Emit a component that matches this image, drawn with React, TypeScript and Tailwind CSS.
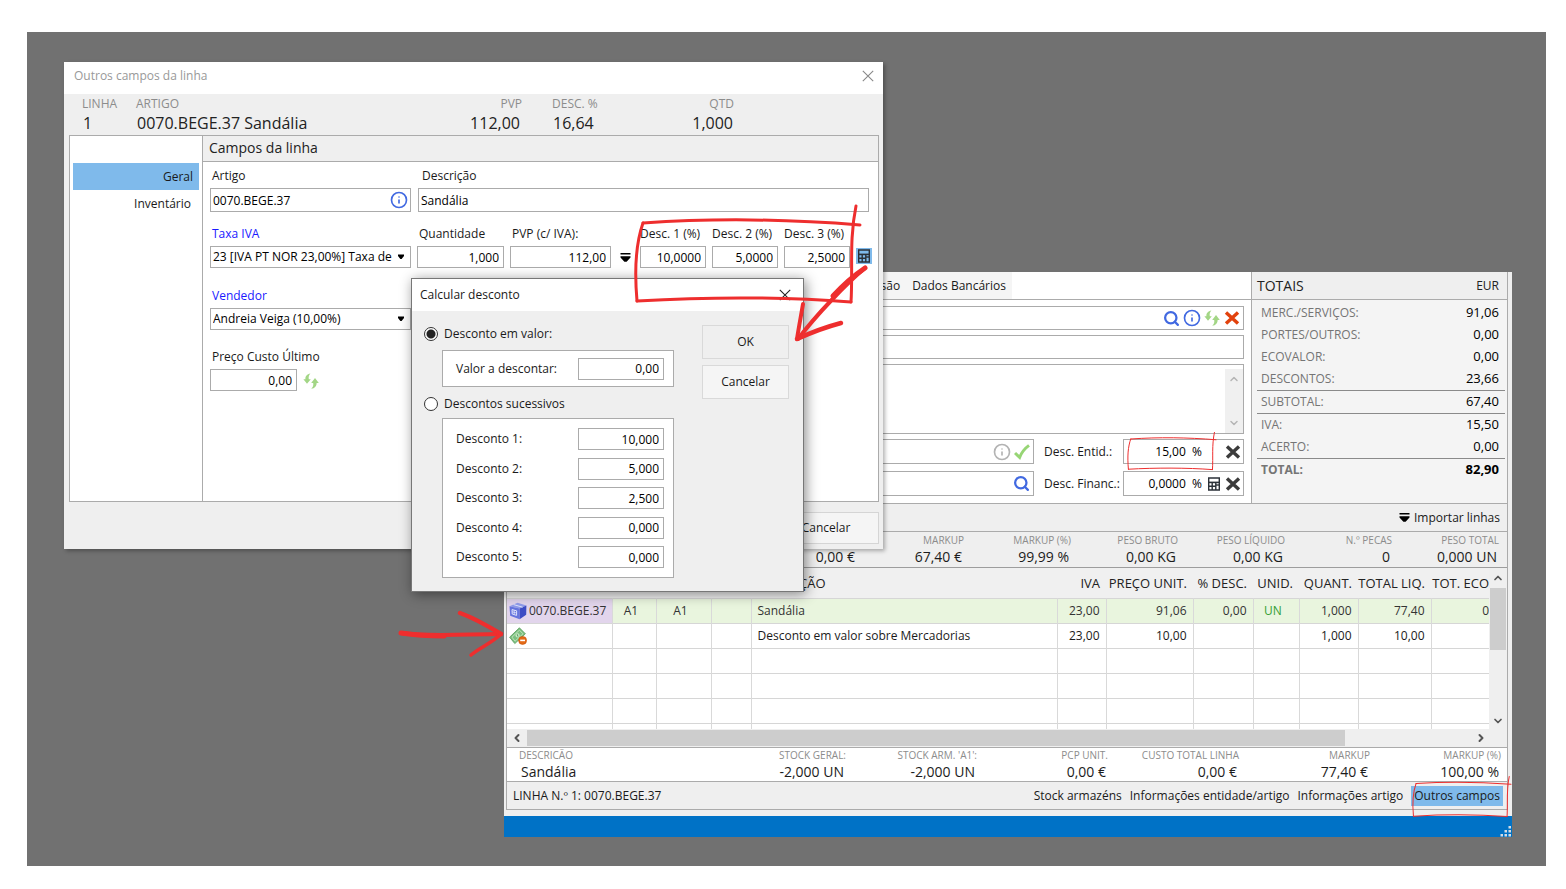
import React from 'react';
import { Search, Info, ChevronUp, ChevronDown, ChevronLeft, ChevronRight } from 'lucide-react';
import { clsx } from 'clsx';

type IconProps = { className?: string };

const RefreshIcon = ({ className }: IconProps) => (
    <svg viewBox="0 0 16 16" className={clsx('h-4 w-4 shrink-0 text-[#a3d686]', className)} fill="currentColor">
        <path d="M7.4 0.6C4 1 2.2 3.4 2.4 6.2H0.4L4 10.8L7.8 6.2H5.8C5.4 4.2 5.8 2.2 7.4 0.6Z" />
        <path d="M8.2 15.8C11.8 15.4 13.8 13 13.6 10H15.8L12 5L8.2 10H10.2C10.6 12.2 10 14.4 8.2 15.8Z" />
    </svg>
);

const CrossIcon = ({ className }: IconProps) => (
    <svg viewBox="0 0 16 16" className={clsx('h-4 w-4 shrink-0', className)} fill="none" stroke="currentColor" strokeWidth="3.4">
        <path d="M2 2.5L14 13.5M14 2.5L2 13.5" />
    </svg>
);

const CloseIcon = ({ className }: IconProps) => (
    <svg viewBox="0 0 12 12" className={clsx('h-3 w-3', className)} fill="none" stroke="currentColor" strokeWidth="1.1">
        <path d="M0.8 0.8L11.2 11.2M11.2 0.8L0.8 11.2" />
    </svg>
);

const CheckIcon = () => (
    <svg viewBox="0 0 16 16" className="h-4 w-4 shrink-0 text-[#97d575]" fill="none" stroke="currentColor" strokeWidth="3">
        <path d="M1 9L5.6 13.4C7.4 9 10.6 4.6 15 1.4" />
    </svg>
);

const CalculatorIcon = () => (
    <svg viewBox="0 0 14 14" className="h-3.5 w-3.5 shrink-0" fill="none" stroke="#2b3138" strokeWidth="1.4">
        <path d="M1.7 1H12.3V13H1.7Z" />
        <path d="M1.7 5.4H12.3" strokeWidth="1.6" />
        <path d="M1.7 9.2H9M5.2 6V13M8.8 6V13" />
        <path d="M9 8H12.3" />
    </svg>
);

const ImportIcon = () => (
    <svg viewBox="0 0 11 11" className="h-[11px] w-[11px] shrink-0" fill="#000">
        <path d="M0.5 1H10.5V2.6H0.5ZM0.5 4.2H10.5V5.6L6.6 9.8H4.4L0.5 5.6Z" />
    </svg>
);

const BoxIcon = () => (
    <svg viewBox="0 0 18 18" className="h-[18px] w-[18px] shrink-0">
        <path d="M0.5 4.2L8.6 0.8L17.4 3.4L10.6 6.6Z" fill="#8f9bea" />
        <path d="M0.5 4.2L10.6 6.6V17.2L1.2 13.8Z" fill="#6675de" />
        <path d="M17.4 3.4L10.6 6.6V17.2L17.2 12.8Z" fill="#3d4cc4" />
        <path d="M4.6 2.6L13.6 5.2M3 7.6L7.6 8.8V13.4L3.2 12Z" fill="none" stroke="#dfe3fb" />
        <path d="M5.2 8.2V12.6M3.2 9.8L7.6 11" stroke="#dfe3fb" strokeWidth="0.8" />
    </svg>
);

const MoneyIcon = () => (
    <svg viewBox="0 0 18 18" className="h-[18px] w-[18px] shrink-0">
        <path d="M0.6 10.2L10.4 0.8L16.4 6.8L5.8 16.6Z" fill="#7cbf7f" stroke="#559b5b" strokeWidth="0.8" />
        <path d="M3 10.2L10.4 3.2L14 6.8L6 14.2Z" fill="none" stroke="#c4e7c1" strokeWidth="0.9" />
        <circle cx="8.6" cy="8.4" r="2.1" fill="#c4e7c1" />
        <path d="M8.2 7.2L9 9.6" stroke="#559b5b" />
        <circle cx="13.6" cy="13.4" r="4" fill="#e56a17" stroke="#c65208" strokeWidth="0.6" />
        <path d="M11.2 13.4H16" stroke="#fff" strokeWidth="1.6" />
    </svg>
);

// Hand drawn frame, stretched over whatever it marks
const MarkerFrame = ({ className, width }: { className: string; width: number }) => (
    <svg
        viewBox="0 0 224 98"
        preserveAspectRatio="none"
        className={clsx('pointer-events-none absolute z-10 overflow-visible', className)}
        fill="none"
        stroke="#ee2e2e"
        strokeWidth={width}
        strokeLinecap="round"
    >
        <path vectorEffect="non-scaling-stroke" d="M7 18C80 13 150 14 224 20" />
        <path vectorEffect="non-scaling-stroke" d="M7 18C0 38 -2 62 1 96" />
        <path vectorEffect="non-scaling-stroke" d="M1 96C70 92 150 92 215 97" />
        <path vectorEffect="non-scaling-stroke" d="M220 1C213 35 217 65 215 97" />
    </svg>
);

const field = 'border border-[#ababab] bg-white text-xs text-black outline-none';

interface NumberFieldProps {
    id: string;
    value: string;
    className?: string;
}

function NumberField({ id, value, className }: NumberFieldProps) {
    return <input id={id} defaultValue={value} className={clsx(field, 'h-[22px] px-1 text-right', className)} />;
}

function LabeledNumber({ id, label, value, className, labelClass }: NumberFieldProps & { label: string; labelClass?: string }) {
    return (
        <div className={clsx('flex flex-col gap-0.5', className)}>
            <label htmlFor={id} className={clsx('h-[18px] whitespace-nowrap', labelClass)}>{label}</label>
            <NumberField id={id} value={value} className="w-full" />
        </div>
    );
}

function SelectField({ id, label, value }: { id: string; label: string; value: string }) {
    return (
        <div className="flex w-[201px] flex-col gap-0.5">
            <label htmlFor={id} className="h-[18px] px-0.5 text-[#1a1aff]">{label}</label>
            <div className="relative">
                <select id={id} className={clsx(field, 'h-[22px] w-full appearance-none pl-0.5')}>
                    <option>{value}</option>
                </select>
                <svg viewBox="0 0 6 5" className="pointer-events-none absolute top-2 right-[7px] h-[5px] w-1.5">
                    <path d="M0 0.5H6V2L3.6 5H2.4L0 2Z" fill="#000" />
                </svg>
            </div>
        </div>
    );
}

const totals = [
    { label: 'MERC./SERVIÇOS:', value: '91,06' },
    { label: 'PORTES/OUTROS:', value: '0,00' },
    { label: 'ECOVALOR:', value: '0,00' },
    { label: 'DESCONTOS:', value: '23,66', line: true },
    { label: 'SUBTOTAL:', value: '67,40', line: true },
    { label: 'IVA:', value: '15,50' },
    { label: 'ACERTO:', value: '0,00', line: true },
    { label: 'TOTAL:', value: '82,90', bold: true },
];

const summary = [
    { label: '', value: '0,00 €' },
    { label: 'MARKUP', value: '67,40 €' },
    { label: 'MARKUP (%)', value: '99,99 %' },
    { label: 'PESO BRUTO', value: '0,00 KG' },
    { label: 'PESO LÍQUIDO', value: '0,00 KG' },
    { label: 'N.º PECAS', value: '0' },
    { label: 'PESO TOTAL', value: '0,000 UN' },
];

const lineSummary = [
    { label: 'STOCK GERAL:', value: '-2,000 UN' },
    { label: "STOCK ARM. 'A1':", value: '-2,000 UN' },
    { label: 'PCP UNIT.', value: '0,00 €' },
    { label: 'CUSTO TOTAL LINHA', value: '0,00 €' },
    { label: 'MARKUP', value: '77,40 €' },
    { label: 'MARKUP (%)', value: '100,00 %' },
];

const columns = [
    { title: '', width: 'w-[105px]' },
    { title: '', width: 'w-11' },
    { title: '', width: 'w-[55px]' },
    { title: '', width: 'w-10' },
    { title: 'ÇÃO', width: '' },
    { title: 'IVA', width: 'w-[49px]' },
    { title: 'PREÇO UNIT.', width: 'w-[87px]' },
    { title: '% DESC.', width: 'w-[60px]' },
    { title: 'UNID.', width: 'w-[46px]' },
    { title: 'QUANT.', width: 'w-[59px]' },
    { title: 'TOTAL LIQ.', width: 'w-[73px]' },
    { title: 'TOT. ECO', width: 'w-[58px]' },
];

const lines = [
    ['0070.BEGE.37', 'A1', 'A1', '', 'Sandália', '23,00', '91,06', '0,00', 'UN', '1,000', '77,40', '0'],
    ['', '', '', '', 'Desconto em valor sobre Mercadorias', '23,00', '10,00', '', '', '1,000', '10,00', ''],
    ['', '', '', '', '', '', '', '', '', '', '', ''],
    ['', '', '', '', '', '', '', '', '', '', '', ''],
    ['', '', '', '', '', '', '', '', '', '', '', ''],
];

function Stat({ label, value, className }: { label: string; value: string; className?: string }) {
    return (
        <div className={clsx('shrink-0 whitespace-nowrap', className)}>
            <div className="h-3.5 text-[10px] leading-[14px] text-[#8c8c8c]">{label}</div>
            <div className="px-0.5 text-sm leading-5 text-[#1c1c1c]">{value}</div>
        </div>
    );
}

function LinesTable() {
    return (
        <div className="flex h-[161px] bg-[#efefef]">
            <div className="min-w-0 flex-1 overflow-hidden">
                <table className="w-full table-fixed border-collapse bg-white">
                    <thead>
                        <tr className="h-[30px] bg-[#f0f0f0] text-[13px] text-[#222]">
                            {columns.map((col, i) => (
                                <th
                                    key={i}
                                    className={clsx(
                                        'p-0 pt-0.5 font-normal whitespace-nowrap',
                                        col.width,
                                        i === 4 ? 'pl-12 text-left' : 'text-right',
                                        i > 4 && i < 11 && 'pr-1.5'
                                    )}
                                >
                                    {col.title}
                                </th>
                            ))}
                        </tr>
                    </thead>
                    <tbody className="text-xs">
                        {lines.map((line, row) => (
                            <tr key={row} className={clsx('h-[25px] border-y border-[#d6d6d6]', row === 0 && 'bg-[#e9f5de] text-[#333]')}>
                                {line.map((cell, i) => (
                                    <td
                                        key={i}
                                        className={clsx(
                                            'p-0 whitespace-nowrap',
                                            i < 11 && 'border-r border-[#d9d9d9] pr-1.5',
                                            i === 0 && 'pl-0.5',
                                            row === 0 && i === 0 && 'bg-[#e2d5ec]',
                                            (i === 1 || i === 2 || i === 8) && 'text-center',
                                            i === 8 && 'text-[#35a035]',
                                            i === 4 && 'pl-1.5',
                                            i > 4 && i !== 8 && 'text-right'
                                        )}
                                    >
                                        {i === 0 ? (
                                            <span className="flex h-6 items-center gap-0.5">
                                                {row === 0 && <BoxIcon />}
                                                {row === 1 && <MoneyIcon />}
                                                {cell}
                                            </span>
                                        ) : cell}
                                    </td>
                                ))}
                            </tr>
                        ))}
                        <tr className="h-1.5">
                            {columns.map((_, i) => (
                                <td key={i} className={clsx('p-0', i < 11 && 'border-r border-[#d9d9d9]')} />
                            ))}
                        </tr>
                    </tbody>
                </table>
            </div>
            <div className="flex w-[18px] flex-col items-center text-[#555]">
                <ChevronUp className="my-1 h-3 w-3" strokeWidth={3.5} />
                <div className="h-[62px] w-4 bg-[#cdcdcd]" />
                <ChevronDown className="mt-auto mb-0.5 h-3 w-3" strokeWidth={3.5} />
            </div>
        </div>
    );
}

function DocumentWindow() {
    return (
        <section className="absolute top-[240px] right-[34px] left-[477px] bg-[#efefef]">
            <div className="mr-1 ml-0.5 border-x border-[#ababab]">
                <div className="flex h-[232px] border-b border-[#ababab]">
                    {/* Entidade */}
                    <div className="flex min-w-0 flex-1 flex-col bg-white">
                        <nav className="flex h-7 shrink-0 border-b border-[#ababab] text-xs">
                            <div className="flex w-[505px] items-center justify-end gap-3 bg-[#f5f5f5] pr-1.5">
                                <a href="#comissao">são</a>
                                <a href="#bancarios">Dados Bancários</a>
                            </div>
                        </nav>
                        <div className="flex flex-col gap-[5px] pt-1.5 pr-[7px]">
                            <div className={clsx(field, 'flex h-6 items-center gap-[3px] pr-[3px]')}>
                                <input aria-label="Entidade" className="h-full min-w-0 flex-1 outline-none" />
                                <Search className="h-[17px] w-[17px] text-[#4169e1]" strokeWidth={3.2} />
                                <Info className="h-[18px] w-[18px] text-[#4169e1]" strokeWidth={2.2} />
                                <RefreshIcon />
                                <CrossIcon className="ml-px text-[#e2420d]" />
                            </div>
                            <input aria-label="Nome" className={clsx(field, 'h-6')} />
                            <div className={clsx(field, 'flex h-[70px]')}>
                                <textarea aria-label="Morada" className="min-w-0 flex-1 resize-none outline-none" />
                                <div className="mt-1 flex w-[18px] flex-col items-center justify-between bg-[#f0f0f0] py-1 text-[#b5b5b5]">
                                    <ChevronUp className="h-3 w-3" strokeWidth={3} />
                                    <ChevronDown className="h-3 w-3" strokeWidth={3} />
                                </div>
                            </div>
                            <div className="flex items-center">
                                <div className={clsx(field, 'flex h-[25px] flex-1 items-center gap-[3px] pr-[3px]')}>
                                    <input aria-label="Contribuinte" className="h-full min-w-0 flex-1 outline-none" />
                                    <Info className="h-[18px] w-[18px] text-[#b3b3b3]" strokeWidth={2.2} />
                                    <CheckIcon />
                                </div>
                                <label htmlFor="descEntid" className="w-[89px] pl-2.5 text-xs">Desc. Entid.:</label>
                                <div className={clsx(field, 'relative flex h-[25px] w-[121px] items-center gap-1 pr-0.5')}>
                                    <input id="descEntid" defaultValue="15,00  %" className="h-full w-[78px] text-right whitespace-pre outline-none" />
                                    <CrossIcon className="ml-auto text-[#3c3c3c]" />
                                    <MarkerFrame className="-top-2 left-1 h-[38px] w-[88px]" width={1} />
                                </div>
                            </div>
                            <div className="mt-0.5 flex items-center">
                                <div className={clsx(field, 'flex h-[25px] flex-1 items-center pr-[3px]')}>
                                    <input aria-label="Condição" className="h-full min-w-0 flex-1 outline-none" />
                                    <Search className="h-[17px] w-[17px] text-[#4169e1]" strokeWidth={3.2} />
                                </div>
                                <label htmlFor="descFinanc" className="w-[89px] pl-2.5 text-xs">Desc. Financ.:</label>
                                <div className={clsx(field, 'flex h-[25px] w-[121px] items-center gap-1 pr-0.5')}>
                                    <input id="descFinanc" defaultValue="0,0000  %" className="h-full w-[78px] text-right whitespace-pre outline-none" />
                                    <span className="ml-auto"><CalculatorIcon /></span>
                                    <CrossIcon className="text-[#3c3c3c]" />
                                </div>
                            </div>
                        </div>
                    </div>

                    {/* Totais */}
                    <div className="w-[256px] border-l border-[#ababab] bg-[#f4f4f4]">
                        <div className="flex h-7 items-center justify-between border-b border-[#ababab] bg-[#efefef] pr-2 pl-[5px] text-[#222]">
                            <h2 className="text-sm">TOTAIS</h2>
                            <span className="text-xs">EUR</span>
                        </div>
                        <dl className="pt-0.5 pr-0.5 pl-[5px]">
                            {totals.map(({ label, value, line, bold }) => (
                                <div
                                    key={label}
                                    className={clsx(
                                        'flex items-center justify-between pr-1.5 pl-1',
                                        line ? 'h-[23px] border-b border-[#8a8a8a]' : 'h-[22px]',
                                        bold && 'font-bold'
                                    )}
                                >
                                    <dt className="text-xs text-[#757575]">{label}</dt>
                                    <dd className="text-[13px] text-black">{value}</dd>
                                </div>
                            ))}
                        </dl>
                    </div>
                </div>

                <div className="flex h-7 items-center justify-end border-b border-[#ababab] pr-[7px]">
                    <button className="flex items-center gap-1 text-xs">
                        <ImportIcon />
                        Importar linhas
                    </button>
                </div>

                <div className="flex h-9 justify-end border-b border-[#9d9d9d] pt-px pr-2 text-right">
                    {summary.map((item, i) => (
                        <Stat key={i} {...item} className="w-[107px]" />
                    ))}
                </div>

                <LinesTable />

                <div className="flex h-[19px] items-center border-b border-[#ababab]">
                    <ChevronLeft className="mx-1 h-3 w-3 text-[#555]" strokeWidth={4} />
                    <div className="h-4 flex-1 bg-[#cdcdcd]" />
                    <div className="flex w-[162px] justify-end pr-5">
                        <ChevronRight className="h-3 w-3 text-[#555]" strokeWidth={4} />
                    </div>
                </div>

                <div className="flex h-[34px] border-b border-[#ababab] bg-white pr-1.5 text-right">
                    <Stat label="DESCRICÃO" value="Sandália" className="mr-auto pl-3 text-left" />
                    {lineSummary.map((item, i) => (
                        <Stat key={i} {...item} className="w-[131px]" />
                    ))}
                </div>

                <div className="flex h-7 items-center border-b border-[#ababab] pr-1 pl-1.5 text-xs">
                    <span className="flex-1">LINHA N.º 1: 0070.BEGE.37</span>
                    <nav className="flex items-center gap-2">
                        <a href="#stock">Stock armazéns</a>
                        <a href="#entidade">Informações entidade/artigo</a>
                        <a href="#artigo">Informações artigo</a>
                        <a href="#outros" className="relative bg-[#7fbaeb] px-[3px] py-0.5">
                            Outros campos
                            <MarkerFrame className="-top-2.5 left-0.5 h-[41px] w-[98px]" width={1} />
                        </a>
                    </nav>
                </div>
            </div>
            <div className="mt-1.5 flex h-[21px] items-end justify-end bg-[#0072c6]">
                <svg viewBox="0 0 13 12" className="h-3 w-[13px]" fill="#d5dde5">
                    <path d="M9.5 1H12V3.5H9.5ZM5.5 5H8V7.5H5.5ZM9.5 5H12V7.5H9.5ZM1.5 9H4V11.5H1.5ZM5.5 9H8V11.5H5.5ZM9.5 9H12V11.5H9.5Z" />
                </svg>
            </div>
        </section>
    );
}

function LineFieldsWindow() {
    return (
        <section className="absolute top-[30px] left-[37px] w-[819px] bg-[#efefef] shadow-[2px_2px_4px_rgba(0,0,0,0.3)]">
            <header className="flex h-8 items-center justify-between bg-white pr-[9px] pb-1 pl-2.5">
                <h1 className="text-xs text-[#999]">Outros campos da linha</h1>
                <button aria-label="Fechar" className="text-[#888]"><CloseIcon /></button>
            </header>

            <div className="grid h-[41px] grid-cols-[54px_1fr_100px_76px_106px_149px] pt-px pl-[18px] text-base leading-5 whitespace-nowrap text-[#222]">
                <div>
                    <div className="text-xs leading-[18px] text-[#8c8c8c]">LINHA</div>
                    <div className="pl-px">1</div>
                </div>
                <div>
                    <div className="text-xs leading-[18px] text-[#8c8c8c]">ARTIGO</div>
                    <div className="pl-px">0070.BEGE.37 Sandália</div>
                </div>
                <div className="pr-[30px] text-right">
                    <div className="text-xs leading-[18px] text-[#8c8c8c]">PVP</div>
                    <div className="pr-0.5">112,00</div>
                </div>
                <div>
                    <div className="text-xs leading-[18px] text-[#8c8c8c]">DESC. %</div>
                    <div className="pl-px">16,64</div>
                </div>
                <div className="text-right">
                    <div className="text-xs leading-[18px] text-[#8c8c8c]">QTD</div>
                    <div className="pr-px">1,000</div>
                </div>
            </div>

            <div className="mr-1 ml-[5px] flex h-[367px] border border-[#ababab] bg-white text-xs">
                <nav className="w-[133px] shrink-0 border-r border-[#ababab] pt-[27px] pr-[3px] pl-[3px] text-right">
                    <a href="#geral" className="block h-[27px] bg-[#7fbaeb] pr-1.5 leading-[27px]">Geral</a>
                    <a href="#inventario" className="block h-[27px] pr-2 leading-[27px]">Inventário</a>
                </nav>
                <div className="min-w-0 flex-1">
                    <h2 className="h-[26px] border-b border-[#ababab] bg-[#efefef] pl-1.5 text-sm leading-6 text-[#222]">Campos da linha</h2>
                    <div className="flex flex-col pt-1.5 pr-1.5 pl-[7px]">
                        <div className="mr-[3px] flex gap-[7px]">
                            <div className="flex w-[201px] flex-col gap-0.5">
                                <label htmlFor="artigo" className="h-[18px] px-0.5">Artigo</label>
                                <div className={clsx(field, 'flex h-6 items-center pr-0.5')}>
                                    <input id="artigo" defaultValue="0070.BEGE.37" className="h-full min-w-0 flex-1 pl-0.5 outline-none" />
                                    <Info className="h-[18px] w-[18px] text-[#4169e1]" strokeWidth={2.2} />
                                </div>
                            </div>
                            <div className="flex flex-1 flex-col gap-0.5">
                                <label htmlFor="descricao" className="h-[18px] px-1">Descrição</label>
                                <input id="descricao" defaultValue="Sandália" className={clsx(field, 'h-6 px-0.5')} />
                            </div>
                        </div>

                        <div className="mt-3.5 flex items-end gap-1.5">
                            <SelectField id="taxa" label="Taxa IVA" value="23 [IVA PT NOR 23,00%] Taxa de" />
                            <LabeledNumber id="quantidade" label="Quantidade" value="1,000" className="w-[87px]" labelClass="px-0.5" />
                            <LabeledNumber id="pvp" label="PVP (c/ IVA):" value="112,00" className="w-[101px]" labelClass="px-0.5" />
                            <div className="flex h-[22px] w-[17px] items-center justify-center"><ImportIcon /></div>
                            <LabeledNumber id="desc1" label="Desc. 1 (%)" value="10,0000" className="w-[66px]" />
                            <LabeledNumber id="desc2" label="Desc. 2 (%)" value="5,0000" className="w-[66px]" />
                            <LabeledNumber id="desc3" label="Desc. 3 (%)" value="2,5000" className="w-[66px]" />
                            <button aria-label="Calcular" className="mb-1 bg-[#7fbaeb] p-px"><CalculatorIcon /></button>
                        </div>

                        <div className="mt-5">
                            <SelectField id="vendedor" label="Vendedor" value="Andreia Veiga (10,00%)" />
                        </div>

                        <div className="mt-[19px] flex items-end gap-1.5">
                            <LabeledNumber id="custo" label="Preço Custo Último" value="0,00" className="w-[87px]" labelClass="px-0.5" />
                            <RefreshIcon className="mb-0.5" />
                        </div>
                    </div>
                </div>
            </div>

            <footer className="flex h-[47px] items-center justify-end pt-1 pr-1">
                <button className="h-8 w-[106px] border border-[#d5d5d5] bg-[#f5f5f5] text-xs">Cancelar</button>
            </footer>
        </section>
    );
}

const discounts = ['10,000', '5,000', '2,500', '0,000', '0,000'];

function DiscountDialog() {
    return (
        <section className="absolute top-[246px] left-[384px] w-[393px] border border-[#777] bg-[#efefef] text-xs shadow-[2px_2px_12px_rgba(0,0,0,0.45)]">
            <header className="flex h-8 items-center justify-between bg-white pr-3 pl-2">
                <h2>Calcular desconto</h2>
                <button aria-label="Fechar" className="text-[#222]"><CloseIcon /></button>
            </header>
            <form className="flex h-[280px] justify-between pt-3.5 pr-3.5 pl-3">
                <div className="flex w-[250px] flex-col">
                    <label className="flex h-[18px] items-center gap-1.5">
                        <input
                            type="radio"
                            name="modo"
                            defaultChecked
                            className="h-3.5 w-3.5 appearance-none rounded-full border border-[#333] bg-white checked:bg-[radial-gradient(circle,#222_0_4px,#fff_5px)]"
                        />
                        Desconto em valor:
                    </label>
                    <div className="mt-[7px] ml-[18px] flex h-[37px] items-center justify-between border border-[#ababab] bg-white pr-[9px] pl-[13px]">
                        <label htmlFor="valor">Valor a descontar:</label>
                        <NumberField id="valor" value="0,00" className="w-[86px]" />
                    </div>
                    <label className="mt-2 flex h-[18px] items-center gap-1.5">
                        <input
                            type="radio"
                            name="modo"
                            className="h-3.5 w-3.5 appearance-none rounded-full border border-[#333] bg-white checked:bg-[radial-gradient(circle,#222_0_4px,#fff_5px)]"
                        />
                        Descontos sucessivos
                    </label>
                    <div className="mt-[5px] ml-[18px] flex h-40 flex-col justify-between border border-[#ababab] bg-white py-[9px] pr-[9px] pl-[13px]">
                        {discounts.map((value, i) => (
                            <div key={i} className="flex items-center justify-between">
                                <label htmlFor={`desconto${i}`}>Desconto {i + 1}:</label>
                                <NumberField id={`desconto${i}`} value={value} className="w-[86px]" />
                            </div>
                        ))}
                    </div>
                </div>
                <div className="flex flex-col gap-1.5">
                    <button type="button" className="h-[34px] w-[87px] border border-[#d9d9d9] bg-[#efefef]">OK</button>
                    <button type="button" className="h-[34px] w-[87px] border border-[#d9d9d9] bg-[#f5f5f5]">Cancelar</button>
                </div>
            </form>
        </section>
    );
}

function Annotations() {
    return (
        <>
            <MarkerFrame className="top-[173px] left-[609px] h-[98px] w-[224px]" width={3} />
            {/* calculator button -> dialog */}
            <svg viewBox="0 0 76 80" className="pointer-events-none absolute top-[232px] left-[766px] h-20 w-[76px] overflow-visible" fill="none" stroke="#ee2e2e" strokeLinecap="round" strokeLinejoin="round">
                <path d="M72 4C54 19 24 50 5 75" strokeWidth="4" />
                <path d="M72 4C63 10 50 21 40 32" strokeWidth="5" />
                <path d="M10 40C8 52 6 62 4 75" strokeWidth="4" />
                <path d="M4 75C17 69 33 63 48 59" strokeWidth="4.5" />
            </svg>
            {/* discount line in the grid */}
            <svg viewBox="0 0 108 50" className="pointer-events-none absolute top-[578px] left-[371px] h-[50px] w-[108px] overflow-visible" fill="none" stroke="#ee2e2e" strokeLinecap="round" strokeLinejoin="round">
                <path d="M3 23C30 27 70 24 103 24" strokeWidth="4" />
                <path d="M3 23C16 25 32 26 46 26" strokeWidth="5" />
                <path d="M62 3C76 8 90 16 103 24" strokeWidth="4.5" />
                <path d="M103 24C94 33 81 38 73 45" strokeWidth="3.5" />
            </svg>
        </>
    );
}

export default function App() {
    return (
        <div className="flex min-h-screen flex-col bg-white pt-8 pr-5 pb-[23px] pl-[27px] font-['Open_Sans',sans-serif] text-[#1a1a1a]">
            <main className="relative flex-1 bg-[#717171]">
                <DocumentWindow />
                <LineFieldsWindow />
                <DiscountDialog />
                <Annotations />
            </main>
        </div>
    );
}
